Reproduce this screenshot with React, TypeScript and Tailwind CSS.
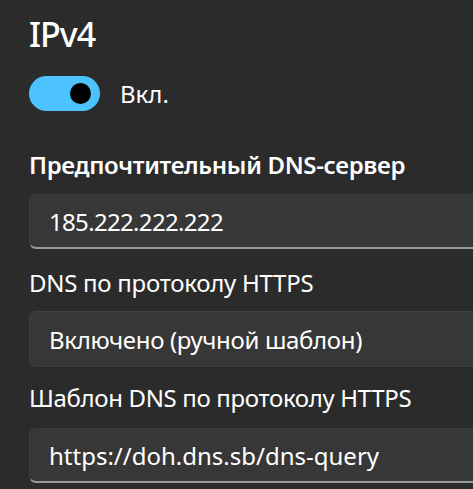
import React from "react";

const font = { fontFamily: '"Noto Sans", "Open Sans", sans-serif' };

export default function App() {
  return (
    <div
      className="w-[473px] h-[489px] bg-[#2b2b2b] overflow-hidden pl-[29px] pt-[14px] text-white"
      style={font}
    >
      <div className="text-[34px] leading-[40px] font-medium tracking-[-1px]">IPv4</div>

      <div className="mt-[22px] flex items-center h-[35px]">
        <div className="relative w-[71px] h-[35px] rounded-full bg-[#4cc2ff]">
          <div className="absolute right-[9px] top-[7px] w-[21px] h-[21px] rounded-full bg-black" />
        </div>
        <span className="ml-[20px] text-[24px] leading-[33px]">Вкл.</span>
      </div>

      <div className="mt-[37px] text-[24px] leading-[33px] font-semibold tracking-[-0.33px]">
        Предпочтительный DNS-сервер
      </div>
      <div className="mt-[13px] w-[500px] h-[55px] rounded-[7px] bg-[#373737] border border-[#3d3d3d] border-b-2 border-b-[#9a9a9a] flex items-center pl-[19px] text-[24px] leading-[33px] tracking-[-0.67px]">
        185.222.222.222
      </div>

      <div className="mt-[17px] text-[24px] leading-[33px] tracking-[-0.27px]">DNS по протоколу HTTPS</div>
      <div className="mt-[12px] w-[500px] h-[56px] rounded-[7px] bg-[#373737] border border-[#3d3d3d] border-t-[#414141] flex items-center pl-[19px] text-[24px] leading-[33px] tracking-[-0.33px]">
        Включено (ручной шаблон)
      </div>

      <div className="mt-[14px] text-[24px] leading-[33px] tracking-[-0.34px]">Шаблон DNS по протоколу HTTPS</div>
      <div className="mt-[14px] w-[500px] h-[55px] rounded-[7px] bg-[#373737] border border-[#3d3d3d] border-b-2 border-b-[#9a9a9a] flex items-center pl-[19px] text-[24px] leading-[33px]">
        https://doh.dns.sb/dns-query
      </div>
    </div>
  );
}
